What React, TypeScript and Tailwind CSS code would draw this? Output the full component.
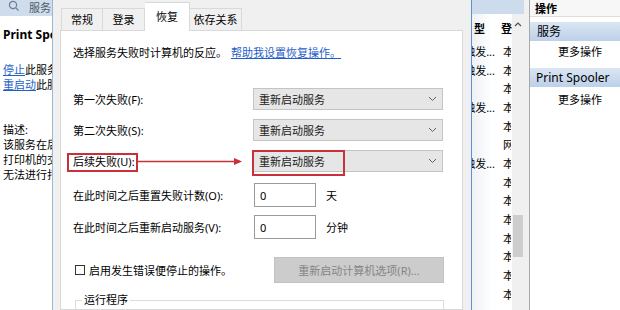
import React from "react";

const F = "font-['Noto_Sans','Noto_Sans_CJK_SC',sans-serif]";

function Chevron() {
  return (
    <svg width="9" height="6" viewBox="0 0 9 6" className="shrink-0">
      <path d="M1 1 L4.5 4.5 L8 1" fill="none" stroke="#606060" strokeWidth="1" />
    </svg>
  );
}

function Dropdown() {
  return (
    <div className="flex h-[22px] w-[190px] items-center justify-between border border-[#c4c4c4] bg-[#e6e6e6] pl-[5px] pr-[5px]">
      <span className="text-[11px] leading-none text-[#1a1a1a]">重新启动服务</span>
      <Chevron />
    </div>
  );
}

const listRows: [string, string][] = [
  ["手动(触发...", "本地系统"],
  ["手动(触发...", "本地系统"],
  ["", "本地系统"],
  ["手动(触发...", "本地系统"],
  ["", "本地系统"],
  ["", "网络服务"],
  ["手动(触发...", "本地系统"],
  ["", "本地系统"],
  ["", "本地系统"],
  ["", "本地系统"],
  ["", "本地系统"],
  ["", "本地系统"],
  ["", "本地系统"],
  ["", "本地系统"],
];

export default function App() {
  return (
    <div className={`relative flex h-[310px] w-[620px] overflow-hidden bg-white text-black ${F}`}>
      {/* Left services panel */}
      <div className="flex w-[52px] shrink-0 flex-col overflow-hidden whitespace-nowrap">
        <div className="flex h-[16px] items-center bg-[#cfdcec] pl-[8px]">
          <svg width="12" height="12" viewBox="0 0 12 12" className="-mt-[4px]">
            <circle cx="5" cy="5" r="3.6" fill="none" stroke="#6a7f99" strokeWidth="1.2" />
            <path d="M7.6 7.6 L10.5 10.5" stroke="#6a7f99" strokeWidth="1.3" />
          </svg>
          <span className="ml-[9px] -mt-[1px] text-[11px] leading-none text-[#4d5866]">服务</span>
        </div>
        <div className="mt-[11px] h-[16px] pl-[3px] text-[12px] font-bold leading-[16px]">Print Spooler</div>
        <div className="mt-[19px] h-[15px] pl-[3px] text-[11px] leading-[15px]">
          <span className="text-[#1e5ec8] underline">停止</span>此服务
        </div>
        <div className="h-[15px] pl-[3px] text-[11px] leading-[15px]">
          <span className="text-[#1e5ec8] underline">重启动</span>此服务
        </div>
        <div className="mt-[30px] pl-[3px] text-[11px] leading-[15px]">
          <div>描述:</div>
          <div>该服务在后台执行打印作业</div>
          <div>打印机的交互。如果关闭</div>
          <div>无法进行打印或查看</div>
        </div>
      </div>

      {/* Dialog */}
      <div className="flex w-[419px] shrink-0 flex-col border-l border-[#9cb6d6] bg-[#f0f0f0] pl-[7px] pr-[8px]">
        {/* tab strip */}
        <div className="relative z-10 flex h-[30px] items-end pl-[1px] text-[11px] leading-none">
          <div className="flex h-[22px] w-[42px] items-center justify-center border border-b-0 border-[#d9d9d9] bg-[#f0f0f0]">常规</div>
          <div className="flex h-[22px] w-[42px] items-center justify-center border border-b-0 border-l-0 border-[#d9d9d9] bg-[#f0f0f0]">登录</div>
          <div className="-mb-[1px] flex h-[29px] w-[45px] items-center justify-center border border-b-0 border-l-0 border-[#d9d9d9] bg-white pb-[2px]">恢复</div>
          <div className="flex h-[22px] w-[52px] items-center justify-center border border-b-0 border-l-0 border-[#d9d9d9] bg-[#f0f0f0]">依存关系</div>
        </div>
        {/* content */}
        <div className="flex flex-1 flex-col border border-[#d9d9d9] bg-white pl-[12px] pr-[18px] text-[11px] leading-none">
          <div className="mt-[14px] flex h-[14px] items-center">
            <span>选择服务失败时计算机的反应。</span>
            <span className="ml-[4px] text-[#1e5ec8] underline">帮助我设置恢复操作。</span>
          </div>

          <div className="mt-[29px] flex h-[22px] items-center">
            <span className="w-[180px]">第一次失败(F):</span>
            <Dropdown />
          </div>
          <div className="mt-[9px] flex h-[22px] items-center">
            <span className="w-[180px]">第二次失败(S):</span>
            <Dropdown />
          </div>
          <div className="mt-[9px] flex h-[22px] items-center">
            <span className="w-[180px]">后续失败(U):</span>
            <Dropdown />
          </div>

          <div className="mt-[11px] flex h-[24px] items-center">
            <span className="w-[181px]">在此时间之后重置失败计数(O):</span>
            <div className="flex h-[24px] w-[62px] items-center border border-[#9a9a9a] pl-[5px]">0</div>
            <span className="ml-[10px]">天</span>
          </div>
          <div className="mt-[8px] flex h-[24px] items-center">
            <span className="w-[181px]">在此时间之后重新启动服务(V):</span>
            <div className="flex h-[24px] w-[62px] items-center border border-[#9a9a9a] pl-[5px]">0</div>
            <span className="ml-[10px]">分钟</span>
          </div>

          <div className="mt-[18px] flex h-[26px] items-center">
            <div className="ml-[2px] h-[10px] w-[10px] border border-[#333]" />
            <span className="ml-[4px]">启用发生错误便停止的操作。</span>
            <div className="ml-auto flex h-[26px] w-[170px] items-center justify-center border border-[#c2c2c2] bg-[#cccccc] text-[#858585]">
              重新启动计算机选项(R)...
            </div>
          </div>

          <div className="relative ml-[2px] mt-[17px] flex-1 border border-b-0 border-[#dcdcdc]">
            <span className="absolute -top-[7px] left-[6px] bg-white px-[2px] leading-none">运行程序</span>
          </div>
        </div>
      </div>

      {/* Services list */}
      <div className="flex w-[59px] shrink-0 border-l border-[#5f8fcc]">
        <div className="flex w-[40px] flex-col bg-gradient-to-r from-[#eef1f5] via-white to-white">
          <div className="h-[14px] bg-[#cddced]" />
          <div className="flex h-[28px] items-center text-[11px] leading-none">
            <span className="ml-[2px] w-[29px] font-bold">型</span>
            <span className="font-bold">登</span>
          </div>
          {listRows.map((r, i) => (
            <div key={i} className="flex h-[18.7px] items-center text-[11px] leading-none">
              <div className="flex w-[23px] justify-end overflow-hidden whitespace-nowrap">{r[0]}</div>
              <div className="ml-[8px] w-[8px] overflow-hidden whitespace-nowrap">{r[1]}</div>
            </div>
          ))}
        </div>
        <div className="flex w-[12px] flex-col bg-[#f0f0f0]">
          <div className="h-[14px] bg-[#cddced]" />
          <div className="flex h-[20px] items-center justify-center">
            <svg width="8" height="5" viewBox="0 0 8 5">
              <path d="M1 4 L4 1 L7 4" fill="none" stroke="#505050" strokeWidth="1.2" />
            </svg>
          </div>
          <div className="mt-[181px] ml-[1px] h-[42px] w-[10px] bg-[#cdcdcd]" />
        </div>
        <div className="w-[6px] border-r border-[#a8a8a8] bg-[#f0f0f0]" />
      </div>

      {/* Actions panel */}
      <div className="flex flex-1 flex-col whitespace-nowrap text-[11px] leading-none">
        <div className="flex h-[17px] items-center border-b border-[#dedede] bg-[#f7f7f7] pl-[5px] font-bold">操作</div>
        <div className="mt-[5px] flex h-[19px] items-center bg-gradient-to-b from-[#dbe6f3] to-[#bcd0e9] pl-[7px] text-[12px]">服务</div>
        <div className="flex h-[20px] items-center pl-[28px]">更多操作</div>
        <div className="mt-[7px] flex h-[19px] items-center bg-gradient-to-b from-[#dbe6f3] to-[#bcd0e9] pl-[6px] text-[12px]">Print Spooler</div>
        <div className="mt-[2px] flex h-[20px] items-center pl-[28px]">更多操作</div>
      </div>

      {/* Annotations */}
      <div className="pointer-events-none absolute left-[67px] top-[153px] h-[19px] w-[71px] border-2 border-[#c8303a]" />
      <div className="pointer-events-none absolute left-[252px] top-[150px] h-[26px] w-[93px] border-2 border-[#c8303a]" />
      <svg className="pointer-events-none absolute left-[138px] top-[157px]" width="110" height="10" viewBox="0 0 110 10">
        <path d="M0 4.5 L102 4.5" stroke="#c8303a" strokeWidth="1.5" />
        <path d="M96 1 L104 4.5 L96 8 Z" fill="#c8303a" />
      </svg>
    </div>
  );
}
